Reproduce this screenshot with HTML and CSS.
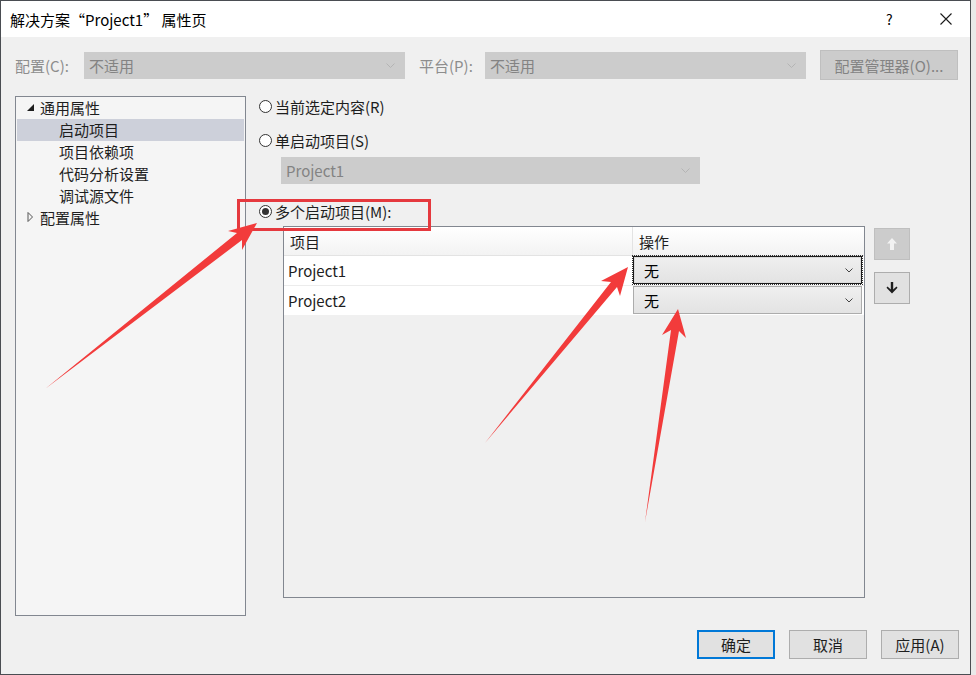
FILE: index.html
```html
<!DOCTYPE html>
<html lang="zh-CN">
<head>
    <meta charset="UTF-8">
    <title>解决方案“Project1” 属性页</title>
    <link rel="stylesheet" href="styles.css">
</head>
<body>
    <section class="dialog">
        <header class="titleBar">
            <div class="title">解决方案“Project1” 属性页</div>
            <div class="help">?</div>
            <div class="close">
                <svg width="12" height="12" viewBox="0 0 12 12"><path d="M0.5 0.5 L11.5 11.5 M11.5 0.5 L0.5 11.5" stroke="#1a1a1a" stroke-width="1.1" fill="none"/></svg>
            </div>
        </header>

        <div class="toolbar">
            <label class="lbl lblConfig">配置(C):</label>
            <div class="combo disabled wide">
                <span>不适用</span>
                <svg class="chev" width="9" height="5" viewBox="0 0 9 5"><path d="M0.5 0.5 L4.5 4.5 L8.5 0.5" stroke="#b4b4b4" fill="none"/></svg>
            </div>
            <label class="lbl lblPlat">平台(P):</label>
            <div class="combo disabled wide">
                <span>不适用</span>
                <svg class="chev" width="9" height="5" viewBox="0 0 9 5"><path d="M0.5 0.5 L4.5 4.5 L8.5 0.5" stroke="#b4b4b4" fill="none"/></svg>
            </div>
            <div class="btn disabledBtn cfgBtn">配置管理器(O)...</div>
        </div>

        <div class="main">
            <div class="tree">
                <div class="node top">
                    <svg class="tw" width="7" height="7" viewBox="0 0 7 7"><polygon points="7,0 7,7 0,7" fill="#1e1e1e"/></svg>
                    <span>通用属性</span>
                </div>
                <div class="node child selected"><span>启动项目</span></div>
                <div class="node child"><span>项目依赖项</span></div>
                <div class="node child"><span>代码分析设置</span></div>
                <div class="node child"><span>调试源文件</span></div>
                <div class="node top">
                    <svg class="tw" width="7" height="10" viewBox="0 0 7 10"><polygon points="1,0.5 5.5,5 1,9.5" fill="none" stroke="#555" stroke-width="1"/></svg>
                    <span>配置属性</span>
                </div>
            </div>

            <div class="pane">
                <div class="radio r1"><i class="dot"></i><span>当前选定内容(R)</span></div>
                <div class="radio r2"><i class="dot"></i><span>单启动项目(S)</span></div>
                <div class="combo disabled single">
                    <span>Project1</span>
                    <svg class="chev" width="9" height="5" viewBox="0 0 9 5"><path d="M0.5 0.5 L4.5 4.5 L8.5 0.5" stroke="#b4b4b4" fill="none"/></svg>
                </div>
                <div class="radio r3"><i class="dot on"></i><span>多个启动项目(M):</span></div>

                <div class="gridRow">
                    <div class="grid">
                        <div class="gHead">
                            <div class="c1">项目</div>
                            <div class="c2">操作</div>
                        </div>
                        <div class="gLine">
                            <div class="c1">Project1</div>
                            <div class="c2">
                                <div class="combo action focus">
                                    <span>无</span>
                                    <svg class="chev" width="8" height="5" viewBox="0 0 8 5"><path d="M0.5 0.5 L4 4 L7.5 0.5" stroke="#444" fill="none"/></svg>
                                </div>
                            </div>
                        </div>
                        <div class="gLine">
                            <div class="c1">Project2</div>
                            <div class="c2">
                                <div class="combo action">
                                    <span>无</span>
                                    <svg class="chev" width="8" height="5" viewBox="0 0 8 5"><path d="M0.5 0.5 L4 4 L7.5 0.5" stroke="#444" fill="none"/></svg>
                                </div>
                            </div>
                        </div>
                    </div>
                    <div class="sideBtns">
                        <div class="sBtn up">
                            <svg width="12" height="14" viewBox="0 0 12 14"><path d="M6 1 L1 6.5 L4 6.5 L4 13 L8 13 L8 6.5 L11 6.5 Z" fill="#f2f2f2"/></svg>
                        </div>
                        <div class="sBtn down">
                            <svg width="12" height="14" viewBox="0 0 12 14"><path d="M4.8 1 L7.2 1 L7.2 8.5 L10.5 5.5 L11.5 6.8 L6 12.5 L0.5 6.8 L1.5 5.5 L4.8 8.5 Z" fill="#1e1e1e"/></svg>
                        </div>
                    </div>
                </div>
            </div>
        </div>

        <footer class="footer">
            <div class="btn okBtn">确定</div>
            <div class="btn">取消</div>
            <div class="btn">应用(A)</div>
        </footer>

        <!-- 标注 -->
        <div class="markBox"></div>
        <svg class="marks" width="976" height="675" viewBox="0 0 976 675">
            <polygon points="45,389 242,240 242,250 257,223 228,231 237,233" fill="#f23b3b"/>
            <polygon points="485,443 617,287 620,296 628,267 601,281 611,282" fill="#f23b3b"/>
            <polygon points="645,522 679,331 686,338 678,309 662,335 671,330" fill="#f23b3b"/>
        </svg>
    </section>
</body>
</html>
```

FILE: styles.css
```css
/*reset*/
*{box-sizing: border-box;}
html,body{margin: 0;padding: 0;height: 100%;overflow: hidden;background: #e9e9e9;}
body{font: 15px "Noto Sans CJK SC", "Noto Sans", sans-serif;color: #1e1e1e;}

.dialog{
    position: relative;
    width: 971px;
    height: 675px;
    background: #f0f0f0;
    border: 1px solid #4a4d52;
    display: flex;
    flex-direction: column;
}

/*title bar*/
.titleBar{
    height: 36px;
    background: #fff;
    display: flex;
    align-items: center;
    padding-left: 9px;
}
.titleBar .title{flex: 1;font-size: 15px;color: #000;}
.titleBar .help{width: 54px;font-size: 14px;color: #000;}
.titleBar .close{width: 30px;display: flex;}

/*toolbar*/
.toolbar{
    margin-top: 13px;
    height: 30px;
    display: flex;
    align-items: center;
    padding-left: 14px;
}
.lbl{color: #8d8d8d;font-size: 15px;}
.lblConfig{width: 69px;}
.lblPlat{width: 66px;margin-left: 14px;}

.combo{
    display: flex;
    align-items: center;
    justify-content: space-between;
    height: 27px;
    padding: 0 9px 0 4px;
    border: 1px solid #adadad;
    white-space: nowrap;
}
.combo.disabled{
    background: #cccccc;
    border-color: #cccccc;
    color: #838383;
}
.combo.wide{width: 321px;}

.btn{
    display: flex;
    align-items: center;
    justify-content: center;
    width: 78px;
    height: 29px;
    background: #e1e1e1;
    border: 1px solid #adadad;
    color: #1e1e1e;
}
.disabledBtn{background: #cccccc;border-color: #bfbfbf;color: #838383;}
.cfgBtn{width: 138px;height: 30px;margin-left: 14px;}

/*main*/
.main{
    margin-top: 16px;
    height: 520px;
    display: flex;
    padding-left: 14px;
}

.tree{
    width: 231px;
    height: 520px;
    background: #f5f5f5;
    border: 1px solid #828790;
    padding: 0 1px;
}
.tree .node{
    height: 22px;
    display: flex;
    align-items: center;
    padding-bottom: 2px;
    color: #1e1e1e;
}
.tree .top{padding-left: 10px;}
.tree .top .tw{width: 7px;margin-right: 6px;}
.tree .child{padding-left: 42px;}
.tree .selected{background: #cdd0da;}

.pane{
    margin-left: 12px;
    display: flex;
    flex-direction: column;
}
.radio{
    height: 24px;
    display: flex;
    align-items: center;
    padding-left: 1px;
}
.radio .dot{
    width: 13px;
    height: 13px;
    border: 1px solid #333;
    border-radius: 50%;
    background: #fff;
    margin-right: 3px;
    display: flex;
    align-items: center;
    justify-content: center;
}
.radio .dot.on:after{
    content: "";
    width: 7px;
    height: 7px;
    border-radius: 50%;
    background: #333;
}
.r1{margin-top: -2px;}
.r2{margin-top: 10px;}
.combo.single{
    width: 419px;
    margin: 5px 0 0 23px;
}
.r3{margin-top: 15px;}

.gridRow{
    display: flex;
    margin-top: 3px;
    padding-left: 25px;
}
.grid{
    width: 582px;
    height: 372px;
    border: 1px solid #828790;
    background: #f0f0f0;
}
.gHead{
    display: flex;
    height: 29px;
    background: linear-gradient(#ffffff, #f3f3f3);
    border-bottom: 1px solid #e3e3e3;
}
.gHead div{display: flex;align-items: center;padding-left: 6px;}
.gHead .c1{width: 349px;border-right: 1px solid #e3e3e3;}
.gLine{
    display: flex;
    height: 30px;
    background: #fff;
    border-bottom: 1px solid #ececec;
}
.gLine:last-child{border-bottom: 0;height: 29px;}
.gLine .c1{width: 349px;padding-left: 4px;display: flex;align-items: center;}
.gLine .c2{width: 230px;padding: 0 1px 1px 0;}
.combo.action{
    height: 100%;
    padding: 0 8px 0 10px;
    background: linear-gradient(#efefef, #e3e3e3);
    border-color: #acacac;
    color: #000;
}
.combo.focus{
    border: 1px solid #1a1a1a;
    outline: 1px dotted #333;
    outline-offset: 0;
    box-shadow: inset 0 0 0 1px #dadada;
}

.sideBtns{
    margin-left: 9px;
    display: flex;
    flex-direction: column;
    padding-top: 2px;
}
.sBtn{
    width: 36px;
    height: 32px;
    display: flex;
    align-items: center;
    justify-content: center;
}
.sBtn.up{background: #cccccc;border: 1px solid #bfbfbf;}
.sBtn.down{margin-top: 12px;background: #e1e1e1;border: 1px solid #adadad;}

/*footer*/
.footer{
    margin-top: 14px;
    display: flex;
    padding-left: 696px;
    gap: 14px;
}
.footer .btn{height: 29px;}
.okBtn{border: 2px solid #0078d7;}

/*annotations*/
.markBox{
    position: absolute;
    left: 236px;
    top: 198px;
    width: 194px;
    height: 32px;
    border: 3px solid #e5393e;
}
.marks{
    position: absolute;
    left: -1px;
    top: -1px;
    pointer-events: none;
}
```
